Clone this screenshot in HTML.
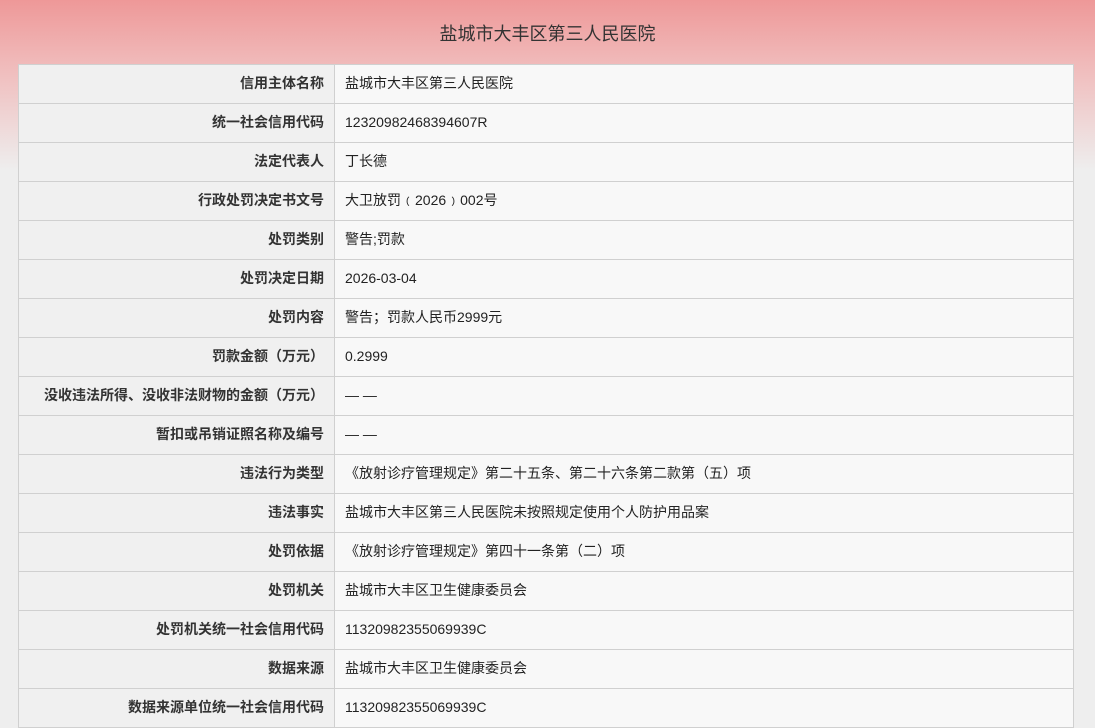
<!DOCTYPE html>
<html style="background:#eeeeee"><head><meta charset="utf-8"><style>
html,body{margin:0;}
body{width:1095px;height:726px;overflow:hidden;background:linear-gradient(#ee9898 0px,#f0b8b8 60px,#eeeeee 170px,#eeeeee);font-family:"Liberation Sans","Noto Sans CJK SC",sans-serif;position:relative;}
h1{margin:0;height:64px;line-height:68px;text-align:center;font-weight:normal;font-size:18px;color:#333;}
table{position:absolute;left:18px;top:64px;width:1056px;border-collapse:collapse;font-size:14px;color:#222;}
td{height:38px;border:1px solid #d0d0d0;padding:0 10px 3px 10px;box-sizing:border-box;height:39px;}
td.l{width:316px;text-align:right;background:#f0f0f0;font-weight:bold;color:#333;}
td.v{background:#f8f8f8;}
</style></head><body>
<h1>盐城市大丰区第三人民医院</h1>
<table>
<tr><td class="l">信用主体名称</td><td class="v">盐城市大丰区第三人民医院</td></tr>
<tr><td class="l">统一社会信用代码</td><td class="v">12320982468394607R</td></tr>
<tr><td class="l">法定代表人</td><td class="v">丁长德</td></tr>
<tr><td class="l">行政处罚决定书文号</td><td class="v">大卫放罚﹙2026﹚002号</td></tr>
<tr><td class="l">处罚类别</td><td class="v">警告;罚款</td></tr>
<tr><td class="l">处罚决定日期</td><td class="v">2026-03-04</td></tr>
<tr><td class="l">处罚内容</td><td class="v">警告；罚款人民币2999元</td></tr>
<tr><td class="l">罚款金额（万元）</td><td class="v">0.2999</td></tr>
<tr><td class="l">没收违法所得、没收非法财物的金额（万元）</td><td class="v">— —</td></tr>
<tr><td class="l">暂扣或吊销证照名称及编号</td><td class="v">— —</td></tr>
<tr><td class="l">违法行为类型</td><td class="v">《放射诊疗管理规定》第二十五条、第二十六条第二款第（五）项</td></tr>
<tr><td class="l">违法事实</td><td class="v">盐城市大丰区第三人民医院未按照规定使用个人防护用品案</td></tr>
<tr><td class="l">处罚依据</td><td class="v">《放射诊疗管理规定》第四十一条第（二）项</td></tr>
<tr><td class="l">处罚机关</td><td class="v">盐城市大丰区卫生健康委员会</td></tr>
<tr><td class="l">处罚机关统一社会信用代码</td><td class="v">11320982355069939C</td></tr>
<tr><td class="l">数据来源</td><td class="v">盐城市大丰区卫生健康委员会</td></tr>
<tr><td class="l">数据来源单位统一社会信用代码</td><td class="v">11320982355069939C</td></tr>
</table>
</body></html>
